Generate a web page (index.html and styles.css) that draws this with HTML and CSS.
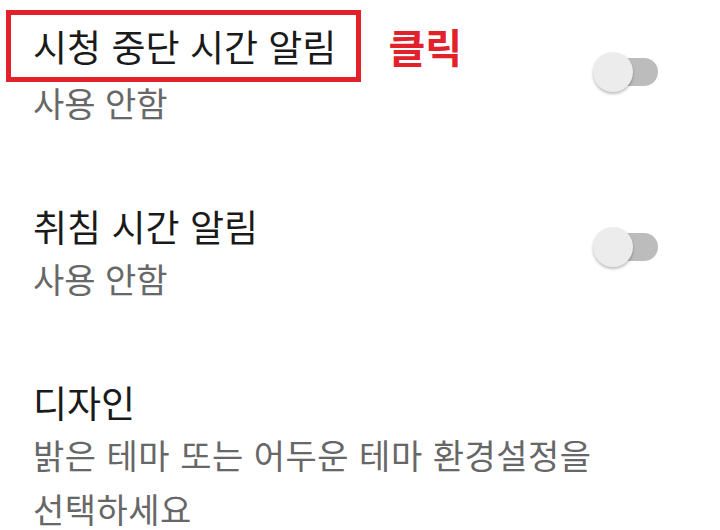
FILE: index.html
```html
<!DOCTYPE html>
<html lang="ko">

<head>
  <meta charset="utf-8">
  <title>설정</title>
  <link rel="stylesheet" href="styles.css">
</head>

<body>
  <div class="settings">
    <div class="item first">
      <div class="text">
        <div class="title-row">
          <span class="mark">시청 중단 시간 알림</span>
          <span class="click">클릭</span>
        </div>
        <div class="summary">사용 안함</div>
      </div>
      <div class="switch"><span class="knob"></span></div>
    </div>

    <div class="item second">
      <div class="text">
        <div class="title">취침 시간 알림</div>
        <div class="summary">사용 안함</div>
      </div>
      <div class="switch"><span class="knob"></span></div>
    </div>

    <div class="item">
      <div class="text">
        <div class="title">디자인</div>
        <div class="summary wide">밝은 테마 또는 어두운 테마 환경설정을 선택하세요</div>
      </div>
    </div>
  </div>
</body>

</html>
```

FILE: styles.css
```css
body {
  margin: 0;
  background-color: #ffffff;
  font-family: "Noto Sans CJK KR", "Noto Sans", sans-serif;
  overflow: hidden;
}

/* 설정 목록 */
.settings {
  display: flex;
  flex-direction: column;
  gap: 70px;
  padding-top: 10px;
}

.item {
  display: flex;
  align-items: flex-start;
  padding-left: 33px;
}

.text {
  flex: 1;
}

.title,
.title-row {
  font-size: 37px;
  line-height: 52px;
  color: #1a1a1a;
}

.title-row {
  display: flex;
  align-items: center;
  margin-left: -27px;
}

/* 빨간 테두리 강조 */
.mark {
  border: 5px solid #e3212b;
  padding: 5px 20px 5px 22px;
}

.click {
  margin-left: 27px;
  font-size: 40px;
  font-weight: bold;
  color: #e3212b;
}

.summary {
  font-size: 34px;
  line-height: 54px;
  color: #676767;
}

.first .summary {
  margin-top: -6px;
}

.summary.wide {
  width: 600px;
  letter-spacing: 0.5px;
  word-break: keep-all;
}

/* 토글 스위치 */
.switch {
  position: relative;
  width: 58px;
  height: 28px;
  margin-right: 62px;
  border-radius: 14px;
  background-color: #bcbcbc;
}

.first .switch {
  margin-top: 48px;
}

.second .switch {
  margin-top: 33px;
}

.knob {
  position: absolute;
  left: -7px;
  top: -6px;
  width: 40px;
  height: 40px;
  border-radius: 50%;
  background-color: #ececec;
  box-shadow: 0 2px 3px rgba(0, 0, 0, 0.25);
}
```
